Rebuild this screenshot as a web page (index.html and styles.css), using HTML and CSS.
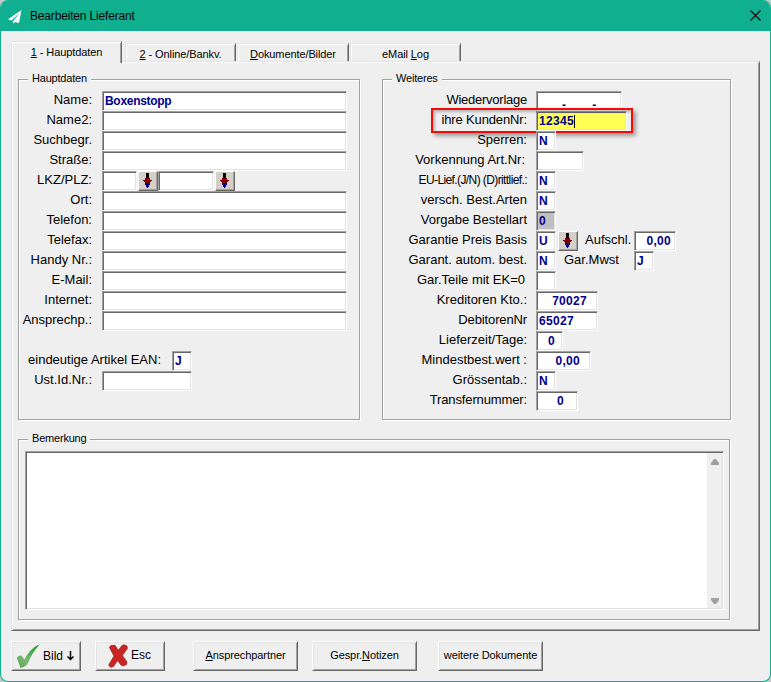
FILE: index.html
```html
<!DOCTYPE html>
<html lang="de">
<head>
<meta charset="utf-8">
<title>Bearbeiten Lieferant</title>
<link rel="stylesheet" href="styles.css">
</head>
<body>
<svg class="defs" width="0" height="0" aria-hidden="true">
  <symbol id="down" viewBox="0 0 10 15">
    <g shape-rendering="crispEdges">
    <path fill="#000" d="M4 0h3v5H4z"/>
    <path fill="#80000a" d="M3 5h5v2h2v1H9v1H8v1H3V9H2V8H1V7h2z"/>
    <path fill="#00008b" d="M3 10h5v2H7v2H6v1H5v-1H4v-2H3z"/>
    </g>
  </symbol>
</svg>
<div class="window">
  <header class="titlebar">
    <svg class="logo" width="14" height="14" viewBox="0 0 14 14"><path fill="#fff" d="M13.500 0 0 9.300 3.500 10.500 11.500 3 5 11.200v2.600L7 12 11 13z"/></svg>
    <h1>Bearbeiten Lieferant</h1>
    <svg class="close" width="11" height="11" viewBox="0 0 11 11"><path d="M.5.5l10 10M10.500.5l-10 10" stroke="#111" stroke-width="1.200"/></svg>
  </header>
  <nav class="tabs">
    <div class="tab active"><span><u>1</u> - Hauptdaten</span></div>
    <div class="tab"><span><u>2</u> - Online/Bankv.</span></div>
    <div class="tab middle"><span><u>D</u>okumente/Bilder</span></div>
    <div class="tab"><span>eMail <u>L</u>og</span></div>
  </nav>
  <main class="panel">
    <div class="columns">
      <section class="group main-data">
        <h2>Hauptdaten</h2>
        <div class="row"><label>Name:</label><div class="field full">Boxenstopp</div></div>
        <div class="row"><label>Name2:</label><div class="field full"></div></div>
        <div class="row"><label>Suchbegr.</label><div class="field full"></div></div>
        <div class="row"><label>Straße:</label><div class="field full"></div></div>
        <div class="row"><label>LKZ/PLZ:</label><div class="field w35"></div><div class="pick"><svg width="10" height="15"><use href="#down"/></svg></div><div class="field w56"></div><div class="pick"><svg width="10" height="15"><use href="#down"/></svg></div></div>
        <div class="row"><label>Ort:</label><div class="field full"></div></div>
        <div class="row"><label>Telefon:</label><div class="field full"></div></div>
        <div class="row"><label>Telefax:</label><div class="field full"></div></div>
        <div class="row"><label>Handy Nr.:</label><div class="field full"></div></div>
        <div class="row"><label>E-Mail:</label><div class="field full"></div></div>
        <div class="row"><label>Internet:</label><div class="field full"></div></div>
        <div class="row"><label>Ansprechp.:</label><div class="field full"></div></div>
        <div class="row spaced"><label class="wide">eindeutige Artikel EAN:</label><div class="field w20">J</div></div>
        <div class="row"><label>Ust.Id.Nr.:</label><div class="field w90"></div></div>
      </section>
      <section class="group more">
        <h2>Weiteres</h2>
        <div class="row"><label class="tight">Wiedervorlage</label><div class="field w86 date"><span>-</span><span>-</span></div></div>
        <div class="row"><label class="snug">ihre KundenNr:</label><div class="field w91 focus">12345<i class="caret"></i></div><div class="highlight"></div></div>
        <div class="row"><label>Sperren:</label><div class="field w20">N</div></div>
        <div class="row"><label class="in2">Vorkennung Art.Nr:</label><div class="field w48"></div></div>
        <div class="row"><label class="narrow">EU-Lief.(J/N) (D)rittlief.:</label><div class="field w20">N</div></div>
        <div class="row"><label>versch. Best.Arten</label><div class="field w20">N</div></div>
        <div class="row"><label>Vorgabe Bestellart</label><div class="field w20 locked">0</div></div>
        <div class="row"><label>Garantie Preis Basis</label><div class="field w20">U</div><div class="pick gap"><svg width="10" height="15"><use href="#down"/></svg></div><span class="side">Aufschl.</span><div class="field w41 num">0,00</div></div>
        <div class="row"><label>Garant. autom. best.</label><div class="field w20">N</div><span class="side mwst">Gar.Mwst</span><div class="field w20">J</div></div>
        <div class="row"><label class="in2">Gar.Teile mit EK=0</label><div class="field w20"></div></div>
        <div class="row"><label>Kreditoren Kto.:</label><div class="field w62 num far">70027</div></div>
        <div class="row"><label class="snug">DebitorenNr</label><div class="field w62">65027</div></div>
        <div class="row"><label>Lieferzeit/Tage:</label><div class="field w27 num mid">0</div></div>
        <div class="row"><label>Mindestbest.wert :</label><div class="field w55 num far">0,00</div></div>
        <div class="row"><label>Grössentab.:</label><div class="field w20">N</div></div>
        <div class="row"><label class="snug">Transfernummer:</label><div class="field w41 num far2">0</div></div>
      </section>
    </div>
    <section class="group remark">
      <h2>Bemerkung</h2>
      <div class="memo">
        <div class="scroll">
          <svg width="8" height="6" viewBox="0 0 8 6"><path fill="#a0a0a0" d="M3 0h2l3 4v2H0V4z"/></svg>
          <svg width="8" height="6" viewBox="0 0 8 6"><path fill="#a0a0a0" d="M0 0h8v2L5 6H3L0 2z"/></svg>
        </div>
      </div>
    </section>
  </main>
  <footer class="actions">
    <div class="btn ok">
      <svg width="24" height="25" viewBox="0 0 24 25"><defs><linearGradient id="g" x1="0" y1="1" x2="1" y2="0"><stop offset="0" stop-color="#57a84f"/><stop offset=".4" stop-color="#7ab974"/><stop offset="1" stop-color="#0d9a1c"/></linearGradient></defs><path fill="url(#g)" d="M.7 14C2 11.500 5 10.800 6 12L8.300 15.500C12 8.500 17 3 23.700.3 18.500 6 14.500 13 11.500 20 9.500 22.500 7 23.500 4.300 23.800 3.500 20.500 2.300 17.500.7 14z"/></svg>
      <span>Bild</span>
      <svg width="7" height="10" viewBox="0 0 7 10"><path d="M3.500 0v9M.5 5.500l3 3 3-3" fill="none" stroke="#000" stroke-width="1.500"/></svg>
    </div>
    <div class="btn esc">
      <svg width="20" height="24" viewBox="0 0 20 24"><path fill="#c92525" stroke="#971515" stroke-width=".7" d="M1.300 3.200 3 1.500 7 1.300 10.200 6.500 14 1.500 16 .8 19 2 19.300 4.500 14.300 11.500 19 18 18.500 20.500 15 22 13 21 9.500 16.500 5.500 22.500 2.500 23.300.7 21 6 12z"/></svg>
      <span>Esc</span>
    </div>
    <div class="btn wide g28"><span><u>A</u>nsprechpartner</span></div>
    <div class="btn wide g14"><span>Gespr.<u>N</u>otizen</span></div>
    <div class="btn wide g21"><span>weitere Dokumente</span></div>
  </footer>
</div>
</body>
</html>
```
FILE: styles.css
```css
* { box-sizing: border-box; }

body {
  margin: 0;
  background: #c4c8c8;
  font-family: "Liberation Sans", Arial, sans-serif;
  font-size: 13px;
  color: #000;
  overflow: hidden;
}

h1, h2 { margin: 0; font-weight: normal; }

.defs { position: absolute; }

.window {
  width: 771px;
  height: 682px;
  background: #efefef;
  border: 1px solid #10af90;
  border-top: 0;
  border-radius: 8px;
  overflow: hidden;
}

/* title bar */
.titlebar {
  height: 31px;
  margin: 0 -1px;
  background: #10af90;
  display: flex;
  align-items: center;
  padding: 2px 10px 0 8px;
}
.titlebar h1 {
  flex: 1;
  margin: -2px 0 0 8px;
  font: 12px/16px "Liberation Sans", Arial, sans-serif;
  letter-spacing: -0.17px;
}
.close { margin-top: -3px; }

/* tab strip */
.tabs {
  display: flex;
  align-items: flex-end;
  height: 30px;
  padding-left: 10px;
  font-size: 11px;
  letter-spacing: -0.1px;
}
.tab {
  height: 18px;
  width: 111px;
  margin-right: 1px;
  border: solid;
  border-width: 1px 1px 0;
  border-color: #e3e3e3 #696969 #e3e3e3 #e3e3e3;
  box-shadow: inset 1px 1px #fff, inset -1px 0 #a0a0a0;
  text-align: center;
  line-height: 21px;
}
.tab.middle { width: 112px; }
.tab.active {
  height: 22px;
  margin: 0 3px -2px 0;
  background: #efefef;
  position: relative;
}
.tab:last-child { margin-right: 0; }
u { text-underline-offset: 1px; }

/* tab page */
.panel {
  width: 749px;
  height: 570px;
  margin-left: 10px;
  border: 1px solid;
  border-color: #e3e3e3 #696969 #696969 #e3e3e3;
  box-shadow: inset 1px 1px #fff, inset -1px -1px #a0a0a0;
  padding: 17px 0 0 6px;
}
.columns { display: flex; gap: 22px; }
.group {
  border: 1px solid #a0a0a0;
  box-shadow: 1px 1px #fff, inset 1px 1px #fff;
  height: 341px;
}
.group h2 {
  width: max-content;
  height: 12px;
  margin: -7px 0 0 9px;
  padding: 0 4px;
  background: #efefef;
  font-size: 11px;
  line-height: 11px;
  letter-spacing: -0.2px;
}
.main-data { width: 342px; }
.more { width: 349px; }

/* form rows */
.row {
  display: flex;
  height: 20px;
  position: relative;
}
h2 + .row { margin-top: 6px; }
.row.spaced { margin-top: 20px; }
.row label {
  width: 73px;
  margin-right: 10px;
  text-align: right;
  line-height: 18px;
  white-space: nowrap;
}
.more .row label { width: 144px; margin-right: 9px; }
.more .row label.in2 { padding-right: 2px; }
.row label.wide { width: 143px; padding-right: 1px; }
.row label.tight { letter-spacing: -0.25px; }
.row label.snug { letter-spacing: -0.13px; }
.row label.narrow { font-size: 12px; letter-spacing: -0.6px; }

.field {
  height: 20px;
  background: #fff;
  border: 1px solid;
  border-color: #a0a0a0 #fff #fff #a0a0a0;
  box-shadow: inset 1px 1px #696969, inset -1px -1px #e3e3e3;
  color: #00008b;
  font-size: 12px;
  font-weight: bold;
  line-height: 19px;
  letter-spacing: 0.3px;
  padding: 0 2px;
  white-space: nowrap;
}
.full { width: 245px; letter-spacing: -0.3px; }
.w20 { width: 20px; }
.w27 { width: 27px; }
.w35 { width: 35px; }
.w35 + .pick { margin-left: 1px; }
.w41 { width: 42px; }
.w48 { width: 48px; }
.w55 { width: 55px; }
.w56 { width: 56px; }
.w62 { width: 62px; }
.w86 { width: 86px; }
.w90 { width: 90px; }
.w91 { width: 91px; }
.num { text-align: right; padding-right: 4px; }
.num.mid { padding-right: 7px; }
.num.far { padding-right: 10px; }
.num.far2 { padding-right: 13px; }
.date { display: flex; padding-left: 25px; gap: 26px; line-height: 26px; }
.focus { background: #ffff55; }
.locked { background: #c0c0c0; }
.caret {
  display: inline-block;
  width: 1px;
  height: 13px;
  background: #000;
  vertical-align: -3px;
}
.highlight {
  position: absolute;
  left: 48px;
  top: -3px;
  width: 202px;
  height: 25px;
  border: 2px solid #f50a0a;
  box-shadow: 3px 3px 4px rgba(0, 0, 0, .35), inset 2px 2px 3px rgba(0, 0, 0, .25);
}

.pick {
  width: 20px;
  height: 20px;
  background: #d4d0c8;
  border: 1px solid;
  border-color: #fff #696969 #696969 #fff;
  box-shadow: inset -1px -1px #a0a0a0;
  padding: 1px 0 0 3px;
  line-height: 0;
}
.w56 + .pick { margin-left: 1px; }
.pick.gap { margin-left: 2px; }
.side { width: 49px; margin-left: 7px; line-height: 18px; white-space: nowrap; }
.side.mwst { width: 70px; margin-left: 8px; }

/* remarks */
.remark { width: 712px; height: 181px; margin-top: 19px; }
.memo {
  width: 699px;
  height: 159px;
  margin: 6px 0 0 6px;
  background: #fff;
  border: 1px solid;
  border-color: #a0a0a0 #fff #fff #a0a0a0;
  box-shadow: inset 1px 1px #696969, inset -1px -1px #e3e3e3;
  padding: 1px;
  display: flex;
  justify-content: flex-end;
}
.scroll {
  width: 15px;
  background: #efefef;
  display: flex;
  flex-direction: column;
  justify-content: space-between;
  padding: 6px 0 4px 4px;
}

/* bottom buttons */
.actions { display: flex; padding: 10px 0 0 10px; }
.btn {
  width: 70px;
  height: 30px;
  border: 1px solid;
  border-color: #fff #696969 #696969 #fff;
  box-shadow: inset 1px 1px #e3e3e3, inset -1px -1px #a0a0a0;
  display: flex;
  align-items: center;
  font-size: 12px;
}
.ok { padding-left: 4px; }
.ok span { margin: 0 4px 0 3px; }
.esc { margin-left: 14px; padding-left: 12px; }
.esc span { margin: -2px 0 0 3px; }
.btn.wide { width: 105px; justify-content: center; font-size: 11px; letter-spacing: -0.08px; }
.btn.wide span { margin-top: -2px; }
.g28 { margin-left: 28px; }
.g14 { margin-left: 14px; }
.g21 { margin-left: 21px; }
```
